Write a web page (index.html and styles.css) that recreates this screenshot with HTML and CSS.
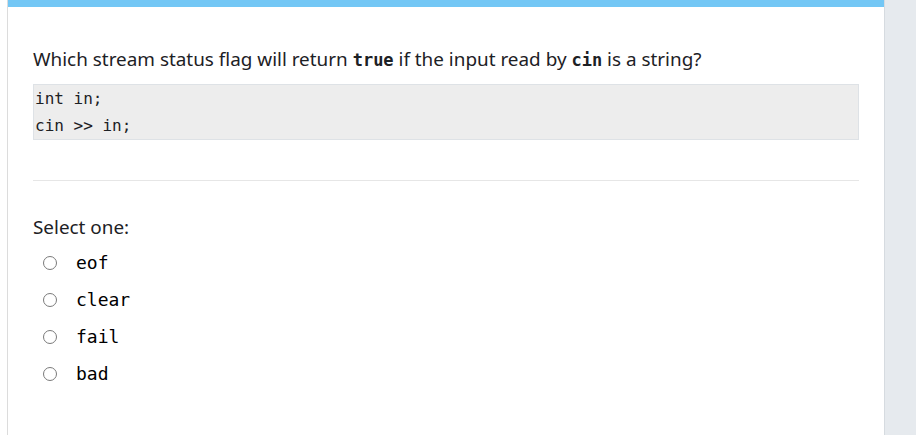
FILE: index.html
```html
<!DOCTYPE html>
<html>
<head>
<meta charset="utf-8">
<link rel="stylesheet" href="styles.css">
</head>
<body>
<div class="main">
  <div class="topbar"></div>
  <div class="content">
    <p class="qtext">Which stream status flag will return <code>true</code> if the input read by <code>cin</code> is a string?</p>
    <pre class="codebox">int in;
cin &gt;&gt; in;</pre>
    <div class="divider"></div>
    <div class="prompt">Select one:</div>
    <div class="answers">
      <label class="opt"><span class="radio"></span><span class="opt-text">eof</span></label>
      <label class="opt"><span class="radio"></span><span class="opt-text">clear</span></label>
      <label class="opt"><span class="radio"></span><span class="opt-text">fail</span></label>
      <label class="opt"><span class="radio"></span><span class="opt-text">bad</span></label>
    </div>
  </div>
</div>
<div class="side"></div>
</body>
</html>
```
FILE: styles.css
```css
html, body {
  margin: 0;
  height: 100%;
}
body {
  display: flex;
  background: #fff;
  font-family: "Noto Sans", "Open Sans", sans-serif;
  color: #1d2125;
}
.main {
  flex: 1;
  margin-left: 7px;
  border-left: 1px solid #dcdcdc;
  display: flex;
  flex-direction: column;
}
.topbar {
  height: 7px;
  background: #73c7f5;
}
.content {
  padding: 0 25px;
}
.qtext {
  margin: 0;
  padding-top: 38px;
  font-size: 18.9px;
  line-height: 28px;
}
.qtext code {
  font-family: "DejaVu Sans Mono", monospace;
  font-weight: bold;
  font-size: 17px;
}
.codebox {
  margin: 10px 0 0;
  background: #ededed;
  border: 1px solid #dee2e6;
  padding: 0 1px;
  font-family: "DejaVu Sans Mono", monospace;
  font-size: 16px;
  line-height: 27px;
  color: #1d2125;
}
.divider {
  margin-top: 40px;
  height: 1px;
  background: #e6e6e6;
}
.prompt {
  margin-top: 32px;
  font-size: 18.9px;
  line-height: 28px;
}
.answers {
  display: flex;
  flex-direction: column;
  margin-top: 3px;
}
.opt {
  display: flex;
  align-items: center;
  height: 37px;
  padding-left: 10px;
}
.radio {
  width: 14px;
  height: 14px;
  border: 1px solid #7a7a7a;
  border-radius: 50%;
  box-sizing: border-box;
}
.opt-text {
  margin-left: 19px;
  font-family: "DejaVu Sans Mono", monospace;
  font-size: 18px;
  color: #000;
}
.side {
  width: 31px;
  background: #e6eaee;
  border-left: 1px solid #d6dbe0;
}
```
